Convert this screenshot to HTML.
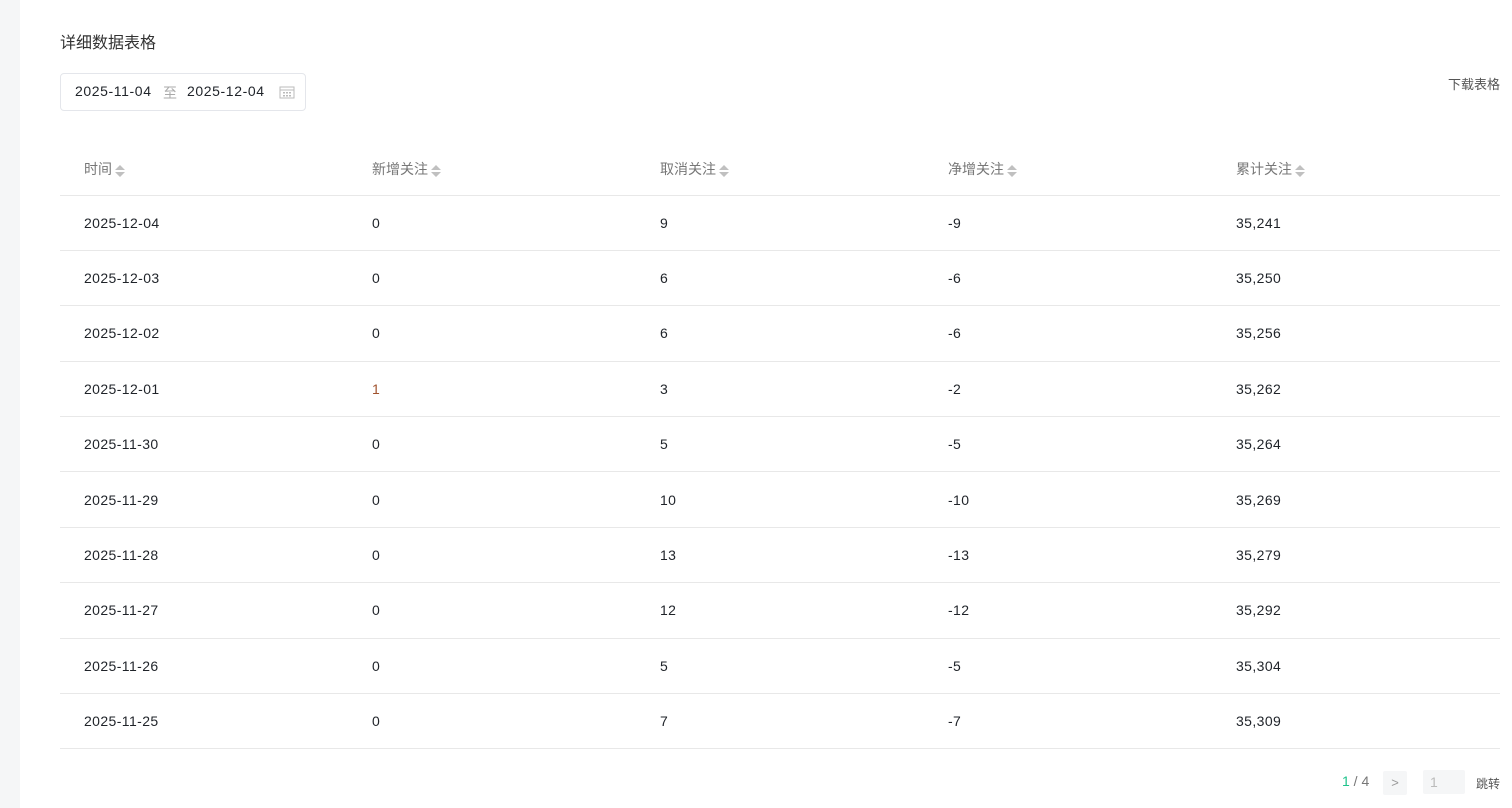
<!DOCTYPE html>
<html><head><meta charset="utf-8"><style>
*{margin:0;padding:0;box-sizing:border-box}
body{width:1512px;height:808px;background:#fff;font-family:"Liberation Sans","Noto Sans CJK SC",sans-serif;position:relative;overflow:hidden;color:#1f2329}
.side{position:absolute;left:0;top:0;width:20px;height:808px;background:#f5f6f7}
.title{position:absolute;left:60px;top:29px;font-size:16px;color:#333}
.date{position:absolute;left:60px;top:73px;width:246px;height:38px;border:1px solid #e4e6eb;border-radius:4px;font-size:14px;color:#1f2329;letter-spacing:0.6px}
.date span{position:absolute;top:9px}
.dl{position:absolute;right:12px;top:74px;font-size:13px;color:#555}
table{position:absolute;left:60px;top:142px;width:1440px;border-collapse:collapse;font-size:14px;letter-spacing:0.4px}
td,th{padding-left:24px;text-align:left;width:288px;border-bottom:1px solid #e8e8e8;height:55.4px;font-weight:normal}
th{height:53px;color:#777;font-size:14px;padding-top:2px;letter-spacing:0}
.s{display:inline-block;vertical-align:middle;margin-left:3px}
.pg{position:absolute;top:773px;font-size:14px}
</style></head><body>
<div class="side"></div>
<div class="title">详细数据表格</div>
<div class="date"><span style="left:14px">2025-11-04</span><span style="left:102px;color:#aaa">至</span><span style="left:126px">2025-12-04</span>
<svg style="position:absolute;left:218px;top:11px" width="16" height="14" viewBox="0 0 16 14"><rect x="1" y="2" width="14" height="11" fill="none" stroke="#bbb"/><line x1="1" y1="5" x2="15" y2="5" stroke="#bbb"/><g fill="#bbb"><rect x="4" y="7" width="2" height="1.5"/><rect x="7" y="7" width="2" height="1.5"/><rect x="10" y="7" width="2" height="1.5"/><rect x="4" y="10" width="2" height="1.5"/><rect x="7" y="10" width="2" height="1.5"/><rect x="10" y="10" width="2" height="1.5"/></g></svg></div>
<div class="dl">下载表格</div>
<table>
<tr><th>时间<svg class="s" width="10" height="14"><path d="M0 6L5 1L10 6Z M0 8L5 13L10 8Z" fill="#c0c0c0"/></svg></th><th>新增关注<svg class="s" width="10" height="14"><path d="M0 6L5 1L10 6Z M0 8L5 13L10 8Z" fill="#c0c0c0"/></svg></th><th>取消关注<svg class="s" width="10" height="14"><path d="M0 6L5 1L10 6Z M0 8L5 13L10 8Z" fill="#c0c0c0"/></svg></th><th>净增关注<svg class="s" width="10" height="14"><path d="M0 6L5 1L10 6Z M0 8L5 13L10 8Z" fill="#c0c0c0"/></svg></th><th>累计关注<svg class="s" width="10" height="14"><path d="M0 6L5 1L10 6Z M0 8L5 13L10 8Z" fill="#c0c0c0"/></svg></th></tr>
<tr><td>2025-12-04</td><td>0</td><td>9</td><td>-9</td><td>35,241</td></tr>
<tr><td>2025-12-03</td><td>0</td><td>6</td><td>-6</td><td>35,250</td></tr>
<tr><td>2025-12-02</td><td>0</td><td>6</td><td>-6</td><td>35,256</td></tr>
<tr><td>2025-12-01</td><td style="color:#a0522d">1</td><td>3</td><td>-2</td><td>35,262</td></tr>
<tr><td>2025-11-30</td><td>0</td><td>5</td><td>-5</td><td>35,264</td></tr>
<tr><td>2025-11-29</td><td>0</td><td>10</td><td>-10</td><td>35,269</td></tr>
<tr><td>2025-11-28</td><td>0</td><td>13</td><td>-13</td><td>35,279</td></tr>
<tr><td>2025-11-27</td><td>0</td><td>12</td><td>-12</td><td>35,292</td></tr>
<tr><td>2025-11-26</td><td>0</td><td>5</td><td>-5</td><td>35,304</td></tr>
<tr><td>2025-11-25</td><td>0</td><td>7</td><td>-7</td><td>35,309</td></tr>
</table>
<div class="pg" style="left:1342px"><span style="color:#1ec28b">1</span><span style="color:#777"> / 4</span></div>
<div style="position:absolute;left:1383px;top:771px;width:24px;height:24px;background:#f5f6f7;border-radius:2px;color:#999;font-size:13px;text-align:center;line-height:24px">&gt;</div>
<div style="position:absolute;left:1423px;top:770px;width:42px;height:24px;background:#f5f6f7;border-radius:2px;color:#bbb;font-size:14px;line-height:24px;padding-left:7px">1</div>
<div class="pg" style="left:1476px;font-size:12px;top:775px;color:#555">跳转</div>
</body></html>
